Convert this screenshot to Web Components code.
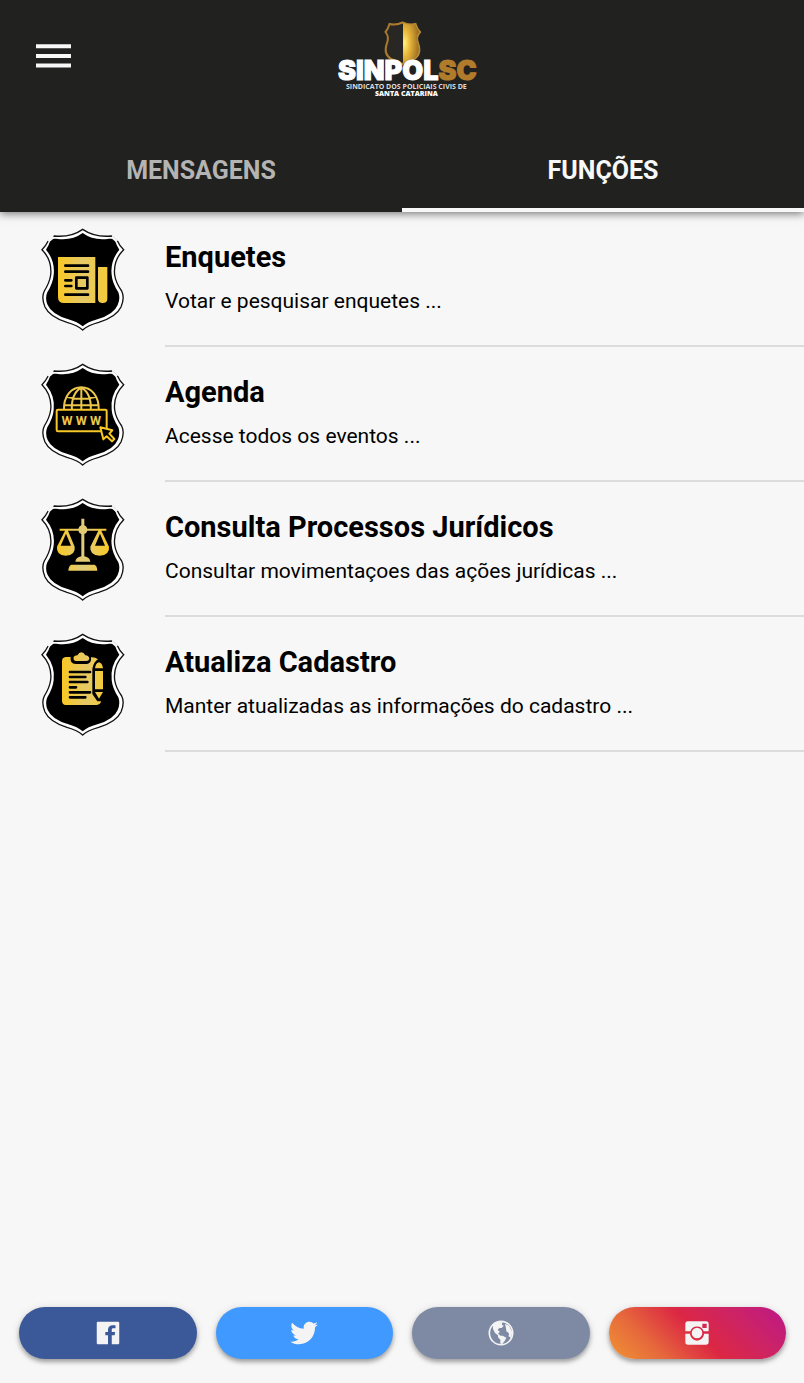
<!DOCTYPE html>
<html lang="pt-BR">
<head>
<meta charset="utf-8">
<meta name="viewport" content="width=device-width, initial-scale=1">
<title>SINPOL SC</title>
<style>
  body { margin: 0; background: #f7f7f7; font-family: Roboto, "Open Sans", sans-serif; color: #000; }
</style>
</head>
<body>
<sinpol-app></sinpol-app>
<script>
const define = (name, html) => {
  const template = document.createElement('template');
  template.innerHTML = html;
  customElements.define(name, class extends HTMLElement {
    constructor() {
      super();
      this.attachShadow({ mode: 'open' }).append(template.content.cloneNode(true));
    }
  });
};

define('sinpol-logo', `
<style>
  :host { display: block; }
  svg { display: block; }
  .brand { font: 900 27px Inter, sans-serif; stroke-width: 1px; }
  .sub { font: 700 7px "Open Sans", sans-serif; }
  .sub.strong { font-weight: 800; }
</style>
<svg width="170" height="95" viewBox="0 0 170 95" role="img" aria-label="SINPOL SC">
  <defs>
    <linearGradient id="rim" x1="0" x2="1"><stop offset="0" stop-color="#a87829"/><stop offset="1" stop-color="#b98a35"/></linearGradient>
    <radialGradient id="gold" cx="0.1" cy="0.5" r="0.9"><stop offset="0" stop-color="#fff07a"/><stop offset="0.35" stop-color="#e9b93c"/><stop offset="1" stop-color="#9c6c1f"/></radialGradient>
  </defs>
  <path d="M82.500 12.500Q89 15.500 95.500 14Q97 19 100 22Q95.500 27 98 33Q102 44 94 49Q87 51 82.500 54Q77 51 71 49Q63 44 67 33Q69.500 27 65.500 22Q68 19 69.500 14Q76 15.500 82.500 12.500Z" fill="#292724" stroke="url(#rim)" stroke-width="2"/>
  <path d="M83 13Q89 15.500 95 14.500Q96.500 19 99 22Q95 27 97.500 33Q101 44 93.500 48.500Q87 51 83 53Z" fill="url(#gold)"/>
  <text class="brand" x="18" y="70" fill="#fff" stroke="#fff">SINPOL<tspan fill="#b07c2c" stroke="#b07c2c">SC</tspan></text>
  <text class="sub" x="26" y="79" fill="#ddd">SINDICATO DOS POLICIAIS CIVIS DE</text>
  <text class="sub strong" x="55" y="86" fill="#fff">SANTA CATARINA</text>
</svg>`);

define('app-header', `
<style>
  :host { display: grid; grid-template-columns: 106px 1fr 100px; height: 128px; align-items: start; }
  button { margin: 32px 0 0 29px; width: 48px; height: 48px; padding: 0; border: 0; background: none; color: #f8f8f8; }
  svg { display: block; margin: auto; }
  sinpol-logo { justify-self: center; margin-top: 10px; }
</style>
<button type="button" aria-label="Menu">
  <svg width="35" height="24" viewBox="0 0 35 24" fill="currentColor"><path d="M0 .3h35v4H0zM0 10h35v4H0zM0 19.500h35v4H0z"/></svg>
</button>
<sinpol-logo></sinpol-logo>`);

define('tab-button', `
<style>
  :host { display: block; flex: 1; }
  button { display: block; box-sizing: border-box; width: 100%; height: 84px; padding: 4px 0 0; border: 0;
    border-bottom: 4px solid transparent; background: none; color: #b4b4b2; font: bold 25px Roboto, sans-serif; }
  :host([active]) button { color: #f8f8f8; border-color: #f8f8f8; }
</style>
<button type="button"><slot></slot></button>`);

define('function-item', `
<style>
  :host { display: flex; height: 135px; padding-left: 41px; align-items: stretch; }
  .body { flex: 1; min-width: 0; margin-left: 40px; box-sizing: border-box; border-bottom: 2px solid #dcdcdc; padding-top: 27px; }
  h2 { margin: 0 0 10px; font: bold 29px/36px Roboto, sans-serif; }
  p { margin: 0; font: 21px/32px Roboto, sans-serif; }
  svg { align-self: center; flex: none; }
  ::slotted(svg) { display: block; }
</style>
<svg width="84" height="104" viewBox="32 25 252 312" aria-hidden="true">
  <path d="M157 29Q122 54 72 49L53 65Q46 80 35 90Q66 122 61 166Q58 188 42 214Q32 234 44 262Q58 292 110 308Q142 317 157 331Q172 317 205 308Q258 292 272 262Q284 234 274 214Q256 188 253 166Q248 122 280 90Q268 80 262 65L243 49Q194 54 157 29Z" fill="#fff" stroke="#111" stroke-width="4"/>
  <path d="M157 40Q124 64 78 57H62Q56 76 47 90Q75 124 70 166Q68 190 51 218Q43 236 52 256Q64 284 114 299Q142 307 157 320Q172 307 201 299Q251 284 262 256Q271 236 264 218Q246 190 244 166Q239 124 267 90Q258 76 252 57H236Q190 64 157 40Z"/>
  <path d="M54 65L70 51M244 51L260 65" stroke="#f7f7f7" stroke-width="8"/>
  <foreignObject x="32" y="25" width="252" height="312"><slot name="icon"></slot></foreignObject>
</svg>
<div class="body"><h2><slot name="title"></slot></h2><p><slot></slot></p></div>`);

define('social-button', `
<style>
  :host { display: block; flex: 1; }
  button { display: flex; width: 100%; height: 52px; padding: 0; border: 0; border-radius: 26px; align-items: center; justify-content: center;
    background: var(--fill); color: #f4f4f4; box-shadow: 0 3px 4px rgba(0,0,0,.3), 0 1px 8px rgba(0,0,0,.12); }
</style>
<button type="button"><slot></slot></button>`);

define('sinpol-app', `
<style>
  :host { display: flex; flex-direction: column; min-height: 100vh; }
  .top { background: #212120; box-shadow: 0 2px 8px rgba(0,0,0,.5); }
  nav { display: flex; }
  main { flex: 1; }
  footer { display: flex; gap: 19px; padding: 19px 18px 24px 19px; }
</style>
<div class="top">
  <app-header></app-header>
  <nav><tab-button>MENSAGENS</tab-button><tab-button active>FUNÇÕES</tab-button></nav>
</div>
<main>
  <function-item>
    <svg slot="icon" width="252" height="312" viewBox="32 25 252 312"><defs><linearGradient id="g1"><stop offset="0" stop-color="#f9c824"/><stop offset=".5" stop-color="#e5c967"/><stop offset="1" stop-color="#f5cb38"/></linearGradient></defs>
      <path d="M83 112H195V250H101Q83 250 83 231ZM203 142H231V237Q231 250 217 250Q203 250 203 237Z" fill="url(#g1)"/>
      <path d="M105 138H173M105 156H173M105 182H123M105 199H123M105 225H173M138 174H171V206H138Z" fill="none" stroke="#000" stroke-width="8" stroke-linecap="round" stroke-linejoin="round"/></svg>
    <span slot="title">Enquetes</span>Votar e pesquisar enquetes ...
  </function-item>
  <function-item>
    <svg slot="icon" width="252" height="312" viewBox="32 25 252 312"><g fill="none" stroke="#ecc64b" stroke-width="6" stroke-linejoin="round">
      <path d="M101 168C96 74 210 74 205 168M153 98V168M125 168Q121 118 153 98Q185 118 181 168M108 126Q153 138 198 126M102 152H204"/>
      <rect x="79" y="165" width="150" height="65" rx="4" fill="#000" stroke="#f7c62a"/>
      <text x="153" y="211" text-anchor="middle" fill="#ecc64b" stroke="none" style="font:bold 38px Roboto,sans-serif">W W W</text>
      <path d="M210 218L246 227L237 237L252 253L245 260L229 245L219 254Z" fill="#000" stroke="#f9c824"/></g></svg>
    <span slot="title">Agenda</span>Acesse todos os eventos ...
  </function-item>
  <function-item>
    <svg slot="icon" width="252" height="312" viewBox="32 25 252 312"><defs><linearGradient id="g3" gradientUnits="userSpaceOnUse" x1="80" x2="237" y1="0" y2="0"><stop offset="0" stop-color="#f9c824"/><stop offset=".5" stop-color="#e1cb7b"/><stop offset="1" stop-color="#f9c824"/></linearGradient></defs>
      <path fill="url(#g3)" fill-rule="evenodd" d="M153 87H162V107Q169 110 171 117H228V123H213L236 171Q239 196 208 198Q177 196 180 171L204 123H171Q169 131 162 133V200Q178 203 180 216H135Q137 203 153 200V133Q146 131 144 123H113L133 171Q137 196 106 198Q77 196 80 171L104 123H88V117H144Q146 110 153 107ZM107 132L91 168H122ZM209 132L194 168H224ZM123 225H192Q200 227 201 243H114Q115 228 123 225Z"/></svg>
    <span slot="title">Consulta Processos Jurídicos</span>Consultar movimentaçoes das ações jurídicas ...
  </function-item>
  <function-item>
    <svg slot="icon" width="252" height="312" viewBox="32 25 252 312"><defs><linearGradient id="g4"><stop offset="0" stop-color="#f9c824"/><stop offset=".6" stop-color="#e5c967"/><stop offset="1" stop-color="#f5cb38"/></linearGradient></defs>
      <path fill="url(#g4)" d="M106 97H121Q118 118 136 118H170Q184 116 182 98Q194 97 203 104Q190 112 186 132V208L201 230H212Q211 240 199 241H106Q95 240 95 228V110Q95 98 106 97ZM130 97Q132 92 141 92Q146 83 153 83Q160 83 165 92Q176 93 177 102Q176 109 168 109H136Q128 108 130 97ZM194 131Q196 115 206 113Q216 115 218 131ZM194 139H218V194H194ZM194 202H218L206 222Z"/>
      <path d="M119 142H179M119 157H165M119 172H171M119 188H137M119 203H179M119 218H165" stroke="#000" stroke-width="8" stroke-linecap="round"/></svg>
    <span slot="title">Atualiza Cadastro</span>Manter atualizadas as informações do cadastro ...
  </function-item>
</main>
<footer>
  <social-button style="--fill:#3b5998"><svg role="img" aria-label="Facebook" width="30" height="30" viewBox="0 0 512 512" fill="currentColor"><path d="M426.800 64H85.200C73.500 64 64 73.500 64 85.200v341.600c0 11.700 9.500 21.200 21.200 21.200H256V296h-45.900v-56H256v-41.400c0-49.600 34.400-76.600 78.700-76.600 21.200 0 44 1.600 49.300 2.300v51.800h-35.300c-24.100 0-28.700 11.400-28.700 28.200V240h57.400l-7.500 56H320v152h106.800c11.700 0 21.200-9.500 21.200-21.200V85.200c0-11.700-9.500-21.200-21.200-21.200z"/></svg></social-button>
  <social-button style="--fill:#4099ff"><svg role="img" aria-label="Twitter" width="30" height="30" viewBox="0 0 512 512" fill="currentColor"><path d="M492 109.500c-17.400 7.700-36 12.900-55.600 15.300 20-12 35.400-31 42.600-53.600-18.700 11.100-39.400 19.200-61.500 23.500C399.800 75.800 374.600 64 346.800 64c-53.500 0-96.800 43.400-96.800 96.900 0 7.600.8 15 2.500 22.100-80.500-4-151.900-42.600-199.600-101.300-8.300 14.300-13.100 31-13.100 48.700 0 33.600 17.200 63.300 43.200 80.700-16-.4-31-4.800-44-12.100v1.200c0 47 33.400 86.100 77.700 95-8.100 2.200-16.700 3.400-25.500 3.400-6.200 0-12.300-.6-18.200-1.800 12.300 38.500 48.100 66.500 90.500 67.300-33.100 26-74.900 41.500-120.300 41.500-7.800 0-15.500-.5-23.100-1.400C62.800 432 113.700 448 168.300 448 346.600 448 444 300.300 444 172.200c0-4.200-.1-8.400-.3-12.500C462.600 146 479 129 492 109.500z"/></svg></social-button>
  <social-button style="--fill:#7e8aa4"><svg role="img" aria-label="Site" width="30" height="30" viewBox="0 0 90 90" fill="currentColor"><circle cx="45" cy="45" r="35" fill="none" stroke="currentColor" stroke-width="5"/><path d="M20 20L34 12L50 13L47 20L53 23L47 30H40L35 36L42 42L36 46L43 53H50L61 59L56 69L48 79L43 76V65L36 58V52L27 45L21 33ZM57 17L69 23L79 43L75 60L68 55L69 46L61 40L60 31Z"/></svg></social-button>
  <social-button style="--fill:linear-gradient(45deg,#f09433 0%,#e6683c 25%,#dc2743 50%,#cc2366 75%,#bc1888 100%)"><svg role="img" aria-label="Instagram" width="30" height="30" viewBox="0 0 90 90" fill="currentColor"><path fill-rule="evenodd" d="M18 10H72Q80 10 80 18V40H65A21 21 0 0 0 25 40H10V18Q10 10 18 10ZM61 17V30H74V17ZM10 47H24A21 21 0 0 0 66 47H80V72Q80 80 72 80H18Q10 80 10 72Z"/><circle cx="45" cy="45" r="16"/></svg></social-button>
</footer>`);
</script>
</body>
</html>
